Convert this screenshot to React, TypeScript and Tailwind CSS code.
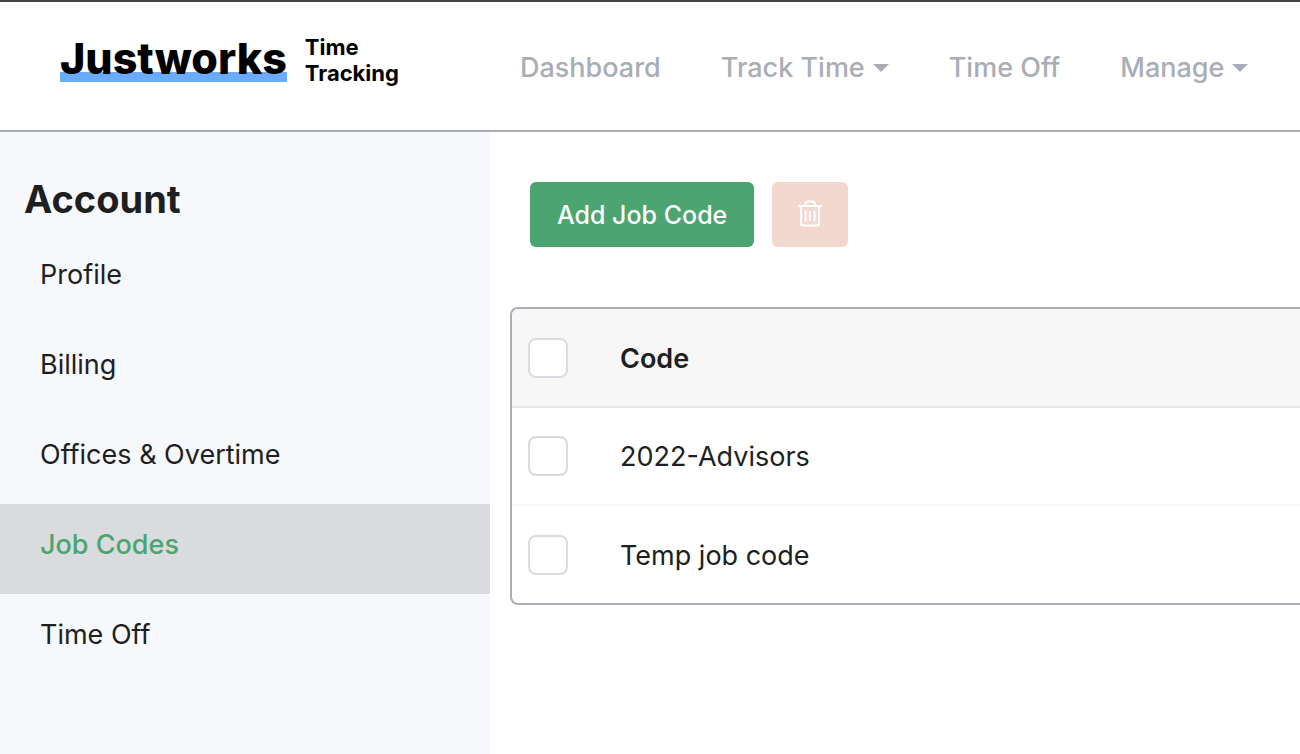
const NAV = [
  { label: "Dashboard", menu: false },
  { label: "Track Time", menu: true },
  { label: "Time Off", menu: false },
  { label: "Manage", menu: true },
];

const SECTIONS = ["Profile", "Billing", "Offices & Overtime", "Job Codes", "Time Off"];

const JOB_CODES = ["2022-Advisors", "Temp job code"];

function Caret() {
  return (
    <svg width="16" height="8" viewBox="0 0 16 8" fill="currentColor" aria-hidden>
      <path d="M0 0h16L8 8z" />
    </svg>
  );
}

function TrashIcon() {
  return (
    <svg width="24" height="27" viewBox="0 0 24 27" fill="none" stroke="currentColor" aria-hidden>
      <path d="M0 6h24" strokeWidth="2" />
      <path d="M7 5.5c0-2.5 1-4 3-4h4c2 0 3 1.5 3 4" strokeWidth="2" />
      <path d="M3 6v17.5A2 2 0 0 0 5 25.5h14a2 2 0 0 0 2-2V6" strokeWidth="2" />
      <path d="M7.5 10.5v11M12 10.5v11M16.5 10.5v11" strokeWidth="2" />
    </svg>
  );
}

function Checkbox({ label }: { label: string }) {
  return (
    <input
      type="checkbox"
      aria-label={label}
      className="block size-10 appearance-none rounded-lg border-2 border-[#dadbe0] bg-white checked:bg-[#4ca470]"
    />
  );
}

export default function App() {
  return (
    <div className="flex min-h-screen flex-col overflow-hidden border-t-2 border-[#444444] bg-white font-['Inter',sans-serif] text-[27px] leading-9 text-[#1d1f21]">
      <header className="flex h-[130px] shrink-0 items-start border-b-2 border-[#aaadb5] pt-8 pl-[60px]">
        <a href="#" className="flex w-[460px] shrink-0 items-start gap-[18px] font-bold text-black">
          <span className="bg-linear-to-t from-[#6aacfb] from-[10px] to-transparent to-[10px] text-[43px] leading-[48px] font-extrabold">
            Justworks
          </span>
          <span className="text-[22px] leading-[26px]">
            Time
            <br />
            Tracking
          </span>
        </a>
        <nav className="flex gap-[60px] pt-4 font-medium whitespace-nowrap text-[#aaadb5]">
          {NAV.map((item) =>
            item.menu ? (
              <button key={item.label} type="button" className="flex items-center gap-2">
                {item.label}
                <Caret />
              </button>
            ) : (
              <a key={item.label} href="#">
                {item.label}
              </a>
            ),
          )}
        </nav>
      </header>

      <div className="flex flex-1">
        <aside className="w-[490px] shrink-0 bg-[#f7f8fc] pt-11">
          <h2 className="px-6 text-[38px] leading-[46px] font-bold">Account</h2>
          <nav className="mt-3">
            {SECTIONS.map((name) => (
              <a
                key={name}
                href="#"
                className={
                  name === "Job Codes"
                    ? "block h-[90px] bg-[#dadbdf] px-10 pt-[23px] font-medium text-[#4ca470]"
                    : "block h-[90px] px-10 pt-[23px]"
                }
              >
                {name}
              </a>
            ))}
          </nav>
        </aside>

        <main className="min-w-0 flex-1 pt-[50px] pl-5">
          <div className="flex gap-[18px] pl-5">
            <button type="button" className="h-[65px] rounded-md bg-[#4ca470] px-[27px] text-[25px] font-medium text-white">
              Add Job Code
            </button>
            <button
              type="button"
              aria-label="Delete"
              className="flex h-[65px] w-[76px] items-center justify-center rounded-md bg-[#f2d8cf] pb-0.5 text-white"
            >
              <TrashIcon />
            </button>
          </div>

          <div className="mt-[60px] overflow-hidden rounded-l-lg border-y-2 border-l-2 border-[#aaadb5]">
            <table className="w-full border-collapse text-left">
              <thead>
                <tr className="h-[98px] border-b-2 border-[#e6e7e9] bg-[#f7f7f7]">
                  <th className="w-[108px] pl-4">
                    <Checkbox label="Select all" />
                  </th>
                  <th className="pt-0.5 font-semibold">Code</th>
                </tr>
              </thead>
              <tbody>
                {JOB_CODES.map((code) => (
                  <tr key={code} className="h-[98px] border-b-2 border-[#f7f8fc] last:border-b-0">
                    <td className="pl-4">
                      <Checkbox label={code} />
                    </td>
                    <td className="pt-0.5">{code}</td>
                  </tr>
                ))}
              </tbody>
            </table>
          </div>
        </main>
      </div>
    </div>
  );
}
